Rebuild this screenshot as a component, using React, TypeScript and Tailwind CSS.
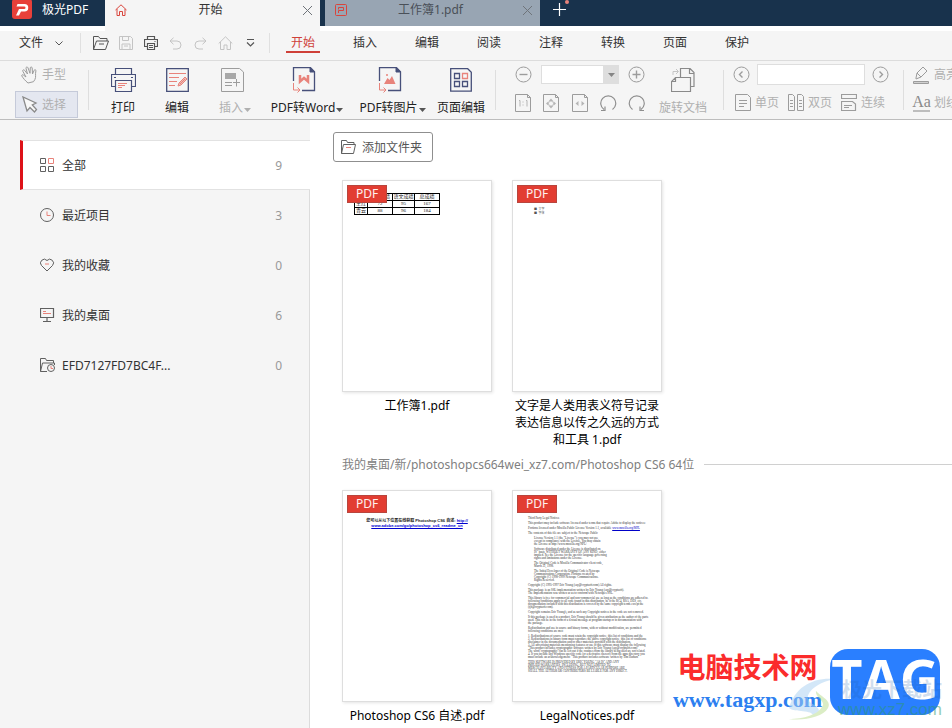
import React from "react";

const NAVY = "#47507a";
const CORAL = "#e8837b";

type SvgProps = {
  w: number;
  h: number;
  color?: string;
  children: React.ReactNode;
};

function Svg({ w, h, color = "#555", children }: SvgProps) {
  return (
    <svg
      width={w}
      height={h}
      viewBox={`0 0 ${w} ${h}`}
      fill="none"
      stroke={color}
      strokeWidth={1}
      className="shrink-0"
      aria-hidden="true"
    >
      {children}
    </svg>
  );
}

const Close = () => (
  <Svg w={11} h={11} color="#6f747a">
    <path d="M1 1l9 9M10 1l-9 9" />
  </Svg>
);

const Caret = ({ color = "#555" }: { color?: string }) => (
  <svg width="7" height="4" viewBox="0 0 7 4" fill={color} className="shrink-0" aria-hidden="true">
    <path d="M0 0h7L3.500 4z" />
  </svg>
);

/* ---------- title bar ---------- */

function TitleBar() {
  return (
    <header className="flex h-[26px] bg-[#18324c]">
      <div className="flex w-[105px] shrink-0 items-center gap-2.5 pb-1.5 pl-3 text-white">
        <svg width="20" height="20" viewBox="0 0 20 20" aria-hidden="true">
          <rect width="20" height="20" y="-1" rx="3" fill="#e8403a" />
          <path d="M5.500 4h7a3.500 3.500 0 010 7.500H9l-2 4H4l3-6.500h5.200a1.300 1.300 0 000-2.600H4.500z" fill="#fff" />
        </svg>
        <span>极光PDF</span>
      </div>
      <div className="flex w-[215px] shrink-0 items-center bg-[#f5f5f5] pb-1.5 pl-2.5 pr-[7px]">
        <Svg w={12} h={12} color="#d9453c">
          <path d="M.5 6L6 .8 11.500 6M2 5v6.500h2.500V7.500h3v4H10V5" />
        </Svg>
        <span className="flex-1 pr-2 text-center text-[#333]">开始</span>
        <button aria-label="关闭开始">
          <Close />
        </button>
      </div>
      <div className="ml-[5px] flex w-[215px] shrink-0 items-center bg-[#98a5b3] pb-1.5 pl-2.5 pr-[7px]">
        <Svg w={12} h={12} color="#d9453c">
          <rect x=".5" y=".5" width="11" height="11" rx="1" />
          <path d="M3.500 9V6.500h5v-3h-5M3.500 3.500v2" />
        </Svg>
        <span className="flex-1 pr-2 text-center text-[#4a5058]">工作簿1.pdf</span>
        <button aria-label="关闭工作簿1.pdf">
          <Close />
        </button>
      </div>
      <button aria-label="新建标签" className="ml-3 pb-1.5">
        <svg width="18" height="20" viewBox="0 0 18 20" aria-hidden="true">
          <path d="M1 9.500h13M7.500 3v13" stroke="#fff" strokeWidth="1.200" />
          <circle cx="15" cy="2" r="2" fill="#e8837b" />
        </svg>
      </button>
    </header>
  );
}

/* ---------- menu bar ---------- */

const TABS = ["开始", "插入", "编辑", "阅读", "注释", "转换", "页面", "保护"];

const QUICK: { label: string; icon: React.ReactNode }[] = [
  {
    label: "打开",
    icon: (
      <Svg w={16} h={14}>
        <path d="M.5 13.500V.5h5l1.500 2h7V5M.5 13.500L3.500 5h12l-3 8.500zM6 8h5" />
      </Svg>
    ),
  },
  {
    label: "保存",
    icon: (
      <Svg w={14} h={14} color="#c4c4c4">
        <path d="M.5.5h11l2 2v11H.5zM3.500.5v4h6v-4M3 13.500V8h8v5.500M5 10h4" />
      </Svg>
    ),
  },
  {
    label: "打印",
    icon: (
      <Svg w={14} h={14}>
        <path d="M3.500 3.500v-3h7v3M3.500 10.500h-3v-7h13v7h-3M3.500 7.500h7v6h-7zM5 9.500h4M5 11.500h4M10.500 5.500h1" strokeWidth="1.200" />
      </Svg>
    ),
  },
  {
    label: "撤销",
    icon: (
      <Svg w={13} h={13} color="#c4c4c4">
        <path d="M4.500.8L1 4l3.500 3.300M1 4h7a4 4 0 010 8H4" />
      </Svg>
    ),
  },
  {
    label: "重做",
    icon: (
      <Svg w={13} h={13} color="#c4c4c4">
        <path d="M8.500.8L12 4 8.500 7.300M12 4H5a4 4 0 000 8h4" />
      </Svg>
    ),
  },
  {
    label: "主页",
    icon: (
      <Svg w={15} h={14} color="#c4c4c4">
        <path d="M.7 7.500L7.500.8l6.800 6.700M2.500 6v7.500H6V9h3v4.500h3.500V6" />
      </Svg>
    ),
  },
  {
    label: "更多",
    icon: (
      <Svg w={9} h={8}>
        <path d="M1 .5h7M1 3.500l3.500 3.500L8 3.500" strokeWidth="1.200" />
      </Svg>
    ),
  },
];

function MenuBar() {
  return (
    <>
      <div className="flex h-[5px]">
        <div className="w-[105px] bg-white" />
        <div className="w-[215px]" />
        <div className="flex-1 bg-white" />
      </div>
      <nav className="flex h-[30px] items-start border-b border-[#dcdcdc] pt-0.5">
        <button className="ml-[19px] flex h-5 items-center gap-3 text-[#333]">
          文件
          <Svg w={8} h={5}>
            <path d="M.5.5L4 4 7.500.5" />
          </Svg>
        </button>
        <div className="ml-[17px] h-5 w-px bg-[#e0e0e0]" />
        <div className="ml-[7px] flex">
          {QUICK.map((q) => (
            <button key={q.label} aria-label={q.label} className="flex h-5 w-[25px] items-center justify-center">
              {q.icon}
            </button>
          ))}
        </div>
        <div className="ml-[6px] h-5 w-px bg-[#e0e0e0]" />
        <div className="ml-0.5 flex">
          {TABS.map((t, i) => (
            <button
              key={t}
              className={
                i === 0
                  ? "relative h-5 w-[62px] text-[#cf4038] after:absolute after:bottom-0 after:left-3.5 after:h-0.5 after:w-[34px] after:bg-[#cf4038]"
                  : "h-5 w-[62px] text-[#333]"
              }
            >
              {t}
            </button>
          ))}
        </div>
      </nav>
    </>
  );
}

/* ---------- ribbon ---------- */

const Divider = () => <div className="mt-[9px] h-10 w-px shrink-0 bg-[#dedede]" />;

function BigButton({
  width,
  label,
  caret,
  disabled,
  children,
}: {
  width: string;
  label: string;
  caret?: boolean;
  disabled?: boolean;
  children: React.ReactNode;
}) {
  return (
    <button
      disabled={disabled}
      className={`flex shrink-0 flex-col items-center whitespace-nowrap pt-1.5 ${width} ${
        disabled ? "text-[#b0b0b0]" : "text-[#222]"
      }`}
    >
      <span className="flex h-[26px] items-center">{children}</span>
      <span className={caret ? "mt-[7px] flex h-4 items-center gap-px pl-1.5" : "mt-[7px] flex h-4 items-center"}>
        {label}
        {caret && (
          <span className="pt-1">
            <Caret color={disabled ? "#b0b0b0" : "#555"} />
          </span>
        )}
      </span>
    </button>
  );
}

const GREY = "#9c9c9c";
const pageOutline = "M.5.5h12l3 3v13H.5z";

function SmallPage({ label, children }: { label: string; children: React.ReactNode }) {
  return (
    <button aria-label={label}>
      <Svg w={17} h={18} color={GREY}>
        <path d="M.5.5h12l3 3v14H.5zM12.500.5v3h3" />
        {children}
      </Svg>
    </button>
  );
}

function Round({ label, d }: { label: string; d: string }) {
  return (
    <button aria-label={label} className="shrink-0">
      <Svg w={17} h={17} color={GREY}>
        <circle cx="8.500" cy="8.500" r="7.500" />
        <path d={d} strokeWidth="1.400" />
      </Svg>
    </button>
  );
}

const IconText = ({ label, children }: { label: string; children: React.ReactNode }) => (
  <button className="flex shrink-0 items-center gap-1 whitespace-nowrap text-[#b0b0b0]">
    {children}
    {label}
  </button>
);

function Ribbon() {
  return (
    <section className="flex h-[59px] overflow-hidden border-b border-[#bdbdbd]" aria-label="工具栏">
      <div className="ml-[15px] flex w-[63px] shrink-0 flex-col gap-0.5 text-[#b0b0b0]">
        <button className="flex h-7 items-center gap-1 pl-1.5">
          <Svg w={17} h={18} color={GREY}>
            <path d="M7 17C4 14.500 2.500 12.500.8 10c-.4-1.400 1-1.600 1.800-.8L5 11 1.800 5.200c-.5-1.300 1.100-2 1.800-.9L6.500 8 5 2.300c-.2-1.500 1.500-1.800 2-.5L9 7.300 9.300 1.800c.2-1.200 1.800-1 1.900.2L11.500 8l1.700-3.800c.5-1 2-.5 1.700.7-.9 3.500.4 6-1 8.600l-1.400 2.200z" />
          </Svg>
          手型
        </button>
        <button className="flex h-[27px] items-center gap-1 border border-[#c5cad9] bg-[#e4e7f0] pl-1.5">
          <Svg w={16} h={18} color="#8a8a8a">
            <path d="M1 1l4 14 3-3.500L12.500 16l2-2.500L10.300 9 14 7z" fill="#f8f8f8" strokeWidth="1.300" />
          </Svg>
          选择
        </button>
      </div>
      <div className="ml-2.5" />
      <Divider />
      <div className="ml-[7px] flex">
        <BigButton width="w-[54px]" label="打印">
          <Svg w={25} h={24} color={NAVY}>
            <path d="M4.500 6.500v-6h16v6M4.500 18.500h-4v-12h24v12h-4M3 9.500h2M20 9.500h2" strokeWidth="1.200" />
            <path d="M4.500 12.500h16v11h-16z" strokeWidth="1.200" />
            <path d="M7 15.500h9M7 17.500h7M7 19.500h4" stroke={CORAL} />
          </Svg>
        </BigButton>
        <BigButton width="w-[54px]" label="编辑">
          <Svg w={23} h={24} color={NAVY}>
            <path d="M.7.700h21.600v22.600H.7z" strokeWidth="1.300" />
            <path d="M3 5.500h17M3 9.500h10M3 13.500h8M3 17.500h6M12 18l1-3 6-6 2 2-6 6z" stroke={CORAL} />
            <path d="M13 16l6-6 1 1-6 6z" fill={CORAL} stroke="none" />
          </Svg>
        </BigButton>
        <BigButton width="w-[56px]" label="插入" caret disabled>
          <Svg w={23} h={24} color={GREY}>
            <path d="M.5.5h18l4 3.500v19.500H.5z" />
            <path d="M4 5h11v6H4z" fill="#a8a8a8" stroke="none" />
            <path d="M4 14.500h7M4 17.500h7M12 14.500h7M15.500 11v7.500" />
          </Svg>
        </BigButton>
        <BigButton width="w-[88px]" label="PDF转Word" caret>
          <Svg w={24} h={26} color={NAVY}>
            <path d="M1.500 14V.7h17l4 4V23.500H10" strokeWidth="1.300" />
            <path d="M18 1v4h4.500z" fill={NAVY} />
            <path d="M8 8v6.500l4-3.500 4 3.500V8" stroke={CORAL} strokeWidth="2.500" />
            <path d="M1.500 16v7h6M5.500 20.500L8 23l-2.500 2.500" stroke={CORAL} />
          </Svg>
        </BigButton>
        <BigButton width="w-[83px]" label="PDF转图片" caret>
          <Svg w={24} h={26} color={NAVY}>
            <path d="M1.500 14V.7h17l4 4V23.500H10" strokeWidth="1.300" />
            <path d="M18 1v4h4.500z" fill={NAVY} />
            <path d="M6 17l3.500-6 2 2 2.500-4 3.500 8z" fill={CORAL} stroke="none" />
            <circle cx="9" cy="8" r="1" fill={CORAL} stroke="none" />
            <path d="M1.500 16v7h6M5.500 20.500L8 23l-2.500 2.500" stroke={CORAL} />
          </Svg>
        </BigButton>
        <BigButton width="w-[60px]" label="页面编辑">
          <Svg w={22} h={24} color={NAVY}>
            <path d="M.7.700h17l3.600 3.500v19H.7z" strokeWidth="1.300" />
            <path d="M4.500 5.500h5v5h-5zM4.500 13.500h5v5h-5zM12.500 13.500h5v5h-5z" strokeWidth="1.300" />
            <path d="M12.500 5.500h5v5h-5z" stroke={CORAL} strokeWidth="1.300" />
          </Svg>
        </BigButton>
      </div>
      <div className="ml-1" />
      <Divider />
      <div className="ml-[19px] flex w-[130px] shrink-0 flex-col gap-2.5 pt-1">
        <div className="flex h-[19px] items-center justify-between">
          <Round label="缩小" d="M4.500 8.500h8" />
          <div className="relative h-[19px] w-[78px]">
            <select
              aria-label="缩放比例"
              className="block h-full w-full appearance-none border border-[#dedede] bg-white"
            />
            <span className="pointer-events-none absolute inset-y-0 right-0 flex w-4 items-center justify-center bg-[#dedede]">
              <Caret color="#858585" />
            </span>
          </div>
          <Round label="放大" d="M4.500 8.500h8M8.500 4.500v8" />
        </div>
        <div className="flex justify-between">
          <SmallPage label="实际大小">
            <path d="M4 6.500h1v6M11 6.500h1v6M8 7.500v1M8 10.500v1" stroke="#b5b5b5" />
          </SmallPage>
          <SmallPage label="适合页面">
            <circle cx="8" cy="9.500" r="2.500" stroke="#c4c4c4" />
            <path d="M8 4.500L5.800 7h4.400zM8 14.500L5.800 12h4.400zM3 9.500l2.500-2.200v4.400zM13 9.500l-2.500-2.200v4.400z" fill="#b5b5b5" stroke="none" />
          </SmallPage>
          <SmallPage label="适合宽度">
            <path d="M6.500 7L3.500 9.500l3 2.500zM9.500 7l3 2.500-3 2.500z" fill="#b5b5b5" stroke="none" />
          </SmallPage>
          <button aria-label="向左旋转">
            <Svg w={17} h={18} color="#8e8e8e">
              <path d="M4 15.500A7.500 7.500 0 1112.500 15.500M1 16.500h4v-4" strokeWidth="1.200" />
            </Svg>
          </button>
          <button aria-label="向右旋转">
            <Svg w={17} h={18} color="#8e8e8e">
              <path d="M13 15.500A7.500 7.500 0 104.500 15.500M16 16.500h-4v-4" strokeWidth="1.200" />
            </Svg>
          </button>
        </div>
      </div>
      <BigButton width="w-[76px]" label="旋转文档" disabled>
        <Svg w={24} h={24} color="#8a8a8a">
          <path d="M9.500 9.500v-9H19l4 4v14h-3M18.500.5v5h4M.5 23.500v-10l4-4h15v14zM.5 13.500h4v-4" strokeWidth="1.200" />
          <path d="M2 7V3.500h5M5 1l2.500 2.500L5 6" stroke="#c5c5c5" />
        </Svg>
      </BigButton>
      <div className="ml-0.5" />
      <Divider />
      <div className="ml-[9px] flex w-[156px] shrink-0 flex-col gap-2.5 pt-1">
        <div className="flex h-[19px] items-center justify-between">
          <Round label="上一页" d="M9.500 5.500l-3 3 3 3" />
          <input aria-label="页码" className="h-[21px] w-[108px] border border-[#dedede] bg-white px-1" />
          <Round label="下一页" d="M7.500 5.500l3 3-3 3" />
        </div>
        <div className="flex justify-between pl-0.5 pr-1">
          <IconText label="单页">
            <Svg w={16} h={17} color={GREY}>
              <path d={pageOutline} />
              <path d="M4 6.500h8M4 9.500h8M4 12.500h5" />
            </Svg>
          </IconText>
          <IconText label="双页">
            <Svg w={16} h={17} color={GREY}>
              <path d="M.5.5h4l2 2v14h-6zM9.500.5h4l2 2v14h-6zM2 6.500h3M2 9.500h3M2 12.500h3M11 6.500h3M11 9.500h3M11 12.500h3" />
            </Svg>
          </IconText>
          <IconText label="连续">
            <Svg w={16} h={17} color={GREY}>
              <path d="M.5.5h15v4H.5zM.5 16.500v-9h11l3 2.500v6.500zM3 11.500h8M3 13.500h5" strokeWidth="1.200" />
            </Svg>
          </IconText>
        </div>
      </div>
      <div className="ml-3.5" />
      <Divider />
      <div className="ml-[9px] flex shrink-0 flex-col gap-2.5 pt-[5px]">
        <IconText label="高亮">
          <Svg w={17} h={18} color={GREY}>
            <path d="M3 12l1-5 6-6 4 4-6 6-5 2zM4 7l4 4" />
            <path d="M.5 15.500h15v2H.5z" fill="#d0d0d0" />
          </Svg>
        </IconText>
        <button className="flex items-center gap-1 whitespace-nowrap text-[#b0b0b0]">
          <span className="flex h-[18px] w-[17px] flex-col items-center border-b-2 border-[#bdbdbd] font-['Liberation_Serif'] text-base leading-4 text-[#8a8a8a]">
            Aa
          </span>
          划线
        </button>
      </div>
    </section>
  );
}

/* ---------- sidebar ---------- */

const SIDE: { label: string; count: number; icon: React.ReactNode }[] = [
  {
    label: "全部",
    count: 9,
    icon: (
      <>
        <path d="M.5.5h5v5h-5zM.5 8.500h5v5h-5zM8.500 8.500h5v5h-5z" />
        <path d="M8.500.5h5v5h-5z" stroke={CORAL} />
      </>
    ),
  },
  {
    label: "最近项目",
    count: 3,
    icon: (
      <>
        <circle cx="7" cy="7" r="6.500" />
        <path d="M7 3.500v4h3.500" stroke={CORAL} />
      </>
    ),
  },
  {
    label: "我的收藏",
    count: 0,
    icon: (
      <>
        <path d="M7 13L1.500 7.500A3.600 3.600 0 017 2.500a3.600 3.600 0 015.500 5z" />
        <path d="M5 6h4" stroke={CORAL} />
      </>
    ),
  },
  {
    label: "我的桌面",
    count: 6,
    icon: (
      <>
        <path d="M.5.5h13v9H.5zM7 9.500v4M3 13.500h8" strokeWidth="1.200" />
        <path d="M3 3.500h3M3 5.500h8" stroke={CORAL} />
      </>
    ),
  },
  {
    label: "EFD7127FD7BC4F...",
    count: 0,
    icon: (
      <>
        <path d="M.5 13.500V.5h5l1 2h7V5M.5 13.500l2-8.500h12V7M.5 13.500H7" />
        <circle cx="11" cy="10" r="3.500" />
        <path d="M11 8v2.500h2" stroke={CORAL} />
      </>
    ),
  },
];

function Sidebar() {
  return (
    <aside className="flex w-[310px] shrink-0 flex-col">
      <div className="h-5" />
      <ul>
        {SIDE.map((s, i) => (
          <li key={s.label} className="flex h-[50px] pl-5">
            <button
              className={
                i === 0
                  ? "flex flex-1 items-center border-y border-l-[3px] border-y-[#e2e2e2] border-l-[#dd1118] bg-white pl-[17px] pr-7 text-left"
                  : "flex flex-1 items-center border-r border-[#dcdcdc] pl-5 pr-[27px] text-left"
              }
            >
              <Svg w={15} h={14} color="#606060">
                {s.icon}
              </Svg>
              <span className="ml-[7px] flex-1 pt-0.5 text-[#333]">{s.label}</span>
              <span className="pt-0.5 text-[#999]">{s.count}</span>
            </button>
          </li>
        ))}
      </ul>
      <div className="flex-1 border-r border-[#dcdcdc]" />
    </aside>
  );
}

/* ---------- documents ---------- */

function Doc({ name, children }: { name: string; children: React.ReactNode }) {
  return (
    <figure className="w-[150px]">
      <div className="relative h-[212px] overflow-hidden border border-[#dedede] bg-white shadow-[1px_1px_3px_#e4e4e4]">
        {children}
        <span className="absolute left-1 top-1 h-[18px] w-10 border border-[#b9453d] bg-[#e23d32] text-center leading-4 text-[#fff0ee]">
          PDF
        </span>
      </div>
      <figcaption className="px-[3px] pt-[5px] text-center leading-[17px] text-black">{name}</figcaption>
    </figure>
  );
}

const SCORES = [
  ["姓名", "数学成绩", "语文成绩", "总成绩"],
  ["王红", "72", "95", "167"],
  ["青云", "88", "96", "184"],
];

function ScoreSheet() {
  return (
    <table className="ml-[11px] mt-3 w-[86px] table-fixed border-collapse text-center font-['Liberation_Serif','Noto_Sans_CJK_SC',serif] text-[5px] leading-[6px] text-[#222]">
      <colgroup>
        <col className="w-[13px]" />
        <col className="w-[25px]" />
        <col className="w-[22px]" />
        <col className="w-[25px]" />
      </colgroup>
      <tbody>
        {SCORES.map((r) => (
          <tr key={r[0]}>
            {r.map((c) => (
              <td key={c} className="overflow-hidden whitespace-nowrap border border-black p-0">
                {c}
              </td>
            ))}
          </tr>
        ))}
      </tbody>
    </table>
  );
}

const LEGAL: { indent?: boolean; link?: string; lines: string[] }[] = [
  { lines: ["Third Party Legal Notices"] },
  { lines: ["This product may include software licensed under terms that require Adobe to display the notices:"] },
  { lines: ["Portions licensed under Mozilla Public License Version 1.1, available "], link: "www.mozilla.org/MPL" },
  { lines: ["The contents of this file are subject to the Netscape Public"] },
  {
    indent: true,
    lines: [
      "License Version 1.1 (the \"License\"); you may not use",
      "except in compliance with the License. You may obtain",
      "the License at http://www.mozilla.org/NPL/",
    ],
  },
  {
    indent: true,
    lines: [
      "Software distributed under the License is distributed on",
      "IS\" basis, WITHOUT WARRANTY OF ANY KIND, either",
      "implied. See the License for the specific language governing",
      "rights and limitations under the License.",
    ],
  },
  { indent: true, lines: ["The Original Code is Mozilla Communicator client code,", "March 31, 1998."] },
  {
    indent: true,
    lines: [
      "The Initial Developer of the Original Code is Netscape",
      "Communications Corporation. Portions created by",
      "Copyright (C) 1998-1999 Netscape Communications.",
      "Rights Reserved.",
    ],
  },
  { lines: ["Copyright (C) 1995-1997 Eric Young (eay@cryptsoft.com) All rights."] },
  {
    lines: [
      "This package is an SSL implementation written by Eric Young (eay@cryptsoft).",
      "The implementation was written so as to conform with Netscapes SSL.",
    ],
  },
  {
    lines: [
      "This library is free for commercial and non-commercial use as long as the conditions are adhered to.",
      "following conditions apply to all code found in this distribution, be it the RC4, RSA, DES, etc.",
      "documentation included with this distribution is covered by the same copyright terms except the",
      "(tjh@cryptsoft.com).",
    ],
  },
  { lines: ["Copyright remains Eric Young's, and as such any Copyright notices in the code are not removed."] },
  {
    lines: [
      "If this package is used in a product, Eric Young should be given attribution as the author of the parts",
      "used. This can be in the form of a textual message at program startup or in documentation with",
      "the package.",
    ],
  },
  {
    lines: [
      "Redistribution and use in source and binary forms, with or without modification, are permitted",
      "following conditions are met:",
    ],
  },
  {
    lines: [
      "1. Redistributions of source code must retain the copyright notice, this list of conditions and the",
      "2. Redistributions in binary form must reproduce the above copyright notice, this list of conditions",
      "disclaimer in the documentation and/or other materials provided with the distribution.",
      "3. All advertising materials mentioning features or use of this software must display the following",
      "\"This product includes cryptographic software written by Eric Young (eay@cryptsoft.com)\"",
      "The word 'cryptographic' can be left out if the routines from the library being used are not related.",
      "4. If you include any Windows specific code (or a derivative thereof) from the apps directory you",
      "must include an acknowledgement: \"This product includes software written by Tim Hudson\"",
    ],
  },
  {
    lines: [
      "THIS SOFTWARE IS PROVIDED BY ERIC YOUNG \"AS IS\" AND ANY",
      "IMPLIED WARRANTIES, INCLUDING, BUT NOT LIMITED TO,",
      "MERCHANTABILITY AND FITNESS FOR A PARTICULAR PURPOSE ARE",
      "SHALL THE AUTHOR OR CONTRIBUTORS BE LIABLE FOR ANY DIRECT.",
    ],
  },
];

function LegalPage() {
  return (
    <div className="flex flex-col gap-0.5 pl-[15px] pt-[26px] font-['Liberation_Serif',serif] text-[3px] leading-[3px] text-[#333]">
      {LEGAL.map((p) => (
        <div key={p.lines[0]} className={p.indent ? "pl-1.5" : ""}>
          {p.lines.map((l) => (
            <p key={l} className="whitespace-nowrap">
              {l}
              {p.link && <span className="text-[#0000c8] underline">{p.link}</span>}
            </p>
          ))}
        </div>
      ))}
    </div>
  );
}

function Documents() {
  return (
    <main className="min-w-0 flex-1 bg-white pt-3">
      <button className="ml-[23px] flex h-[30px] w-[100px] items-center gap-1.5 rounded-[3px] border border-[#8f8f8f] pl-[7px] text-[#555]">
        <Svg w={15} h={14} color="#606060">
          <path d="M.5 13.500V.5h5l1 2h6.500V4.500M.5 13.500l2-9h12l-2 9z" />
          <path d="M5 7.500h5" stroke={CORAL} />
        </Svg>
        <span className="pt-0.5">添加文件夹</span>
      </button>
      <div className="ml-8 mt-[18px] flex flex-wrap gap-5">
        <Doc name="工作簿1.pdf">
          <ScoreSheet />
        </Doc>
        <Doc name="文字是人类用表义符号记录表达信息以传之久远的方式和工具 1.pdf">
          <div className="pl-[21px] pt-[26px] text-[3px] leading-[4px] text-[#555]">
            <p>■&nbsp; 文字</p>
            <p>■&nbsp; 字体</p>
          </div>
        </Doc>
      </div>
      <div className="ml-8 mt-2 flex h-[17px] items-center gap-2.5 text-[#808080]">
        <h2 className="whitespace-nowrap">我的桌面/新/photoshopcs664wei_xz7.com/Photoshop CS6 64位</h2>
        <div className="h-px flex-1 bg-[#d0d0d0]" />
      </div>
      <div className="ml-8 mt-[17px] flex flex-wrap gap-5">
        <Doc name="Photoshop CS6 自述.pdf">
          <p className="px-5 pt-[27px] text-center font-['Liberation_Sans','Noto_Sans_CJK_SC',sans-serif] text-[4px] font-bold leading-[5px] text-[#222]">
            您可以从以下位置在线获取 Photoshop CS6 自述:{" "}
            <a href="#readme" className="text-[#0000d0] underline">
              http://
              <br />
              www.adobe.com/go/photoshop_cs6_readme_cn
            </a>
          </p>
        </Doc>
        <Doc name="LegalNotices.pdf">
          <LegalPage />
        </Doc>
      </div>
    </main>
  );
}

/* ---------- site mark floating over the page corner ---------- */

function SiteMark() {
  return (
    <div className="pointer-events-none absolute bottom-[13px] right-3 flex items-center gap-2">
      <div className="text-center">
        <p className="text-[28px] font-bold leading-9 text-[#fb2c2c]">电脑技术网</p>
        <p className="font-['Liberation_Serif',serif] text-[22px] font-bold leading-[30px] text-[#2d7ff0]">www.tagxp.com</p>
      </div>
      <svg width="56" height="44" viewBox="0 0 56 44" className="absolute -bottom-1.5 left-[114px] opacity-50" aria-hidden="true">
        <path d="M2 31C8 10 26 0 48 2 26 6 15 20 24 26c8 5 12 8 2 14 2-8-18-4-24-9z" fill="#a9d0f2" />
        <path d="M2 42c14 0 30-4 34-14 1-5-8-8-7-14 5 6 16 9 12 17-5 9-24 13-39 11z" fill="#b9dd8c" />
      </svg>
      <div className="relative flex h-[66px] w-[110px] items-center justify-center rounded-[18px] bg-[#2a7fff] pb-2 font-['Open_Sans',sans-serif] text-[54px] font-bold leading-none text-white">
        TAG
        <div className="absolute -right-0.5 top-[29px] whitespace-nowrap text-right font-['Liberation_Sans','Noto_Sans_CJK_SC',sans-serif]">
          <p className="text-xl font-bold leading-6 text-[#1c5fae] opacity-20">极光下载站</p>
          <p className="text-[17px] font-normal leading-4 text-[#2c9a6c] opacity-50">www.xz7.com</p>
        </div>
      </div>
    </div>
  );
}

export default function App() {
  return (
    <div className="relative flex h-screen flex-col overflow-hidden bg-[#f5f5f5] font-['Noto_Sans','Noto_Sans_CJK_SC',sans-serif] text-xs">
      <TitleBar />
      <MenuBar />
      <Ribbon />
      <div className="flex min-h-0 flex-1">
        <Sidebar />
        <Documents />
      </div>
      <SiteMark />
    </div>
  );
}
